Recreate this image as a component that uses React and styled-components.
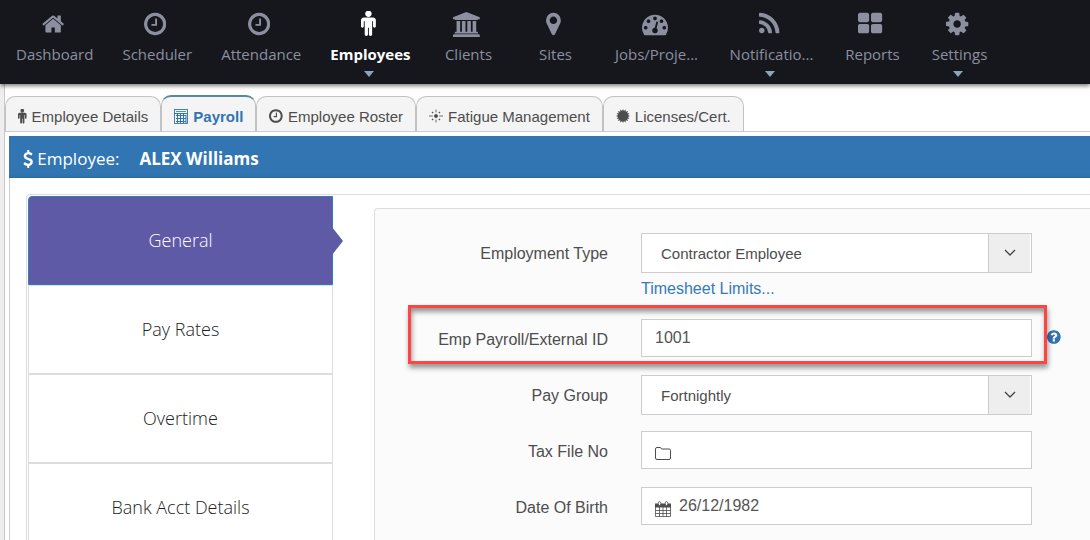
import React, { useState } from 'react';
import styled, { createGlobalStyle, css } from 'styled-components';

const GlobalStyle = createGlobalStyle`
  * { box-sizing: border-box; }
  body {
    margin: 0;
    background: #eeeeee;
    color: #4d4d4d;
    font-family: "Liberation Sans", Arial, sans-serif;
    font-size: 16px;
    overflow-x: hidden;
  }
  button, input, select { font: inherit; color: inherit; border-radius: 0; }
`;

const headingFont = '"Open Sans", "Noto Sans", sans-serif';

// name: [glyph width, path], every glyph is 1792 high
const glyphs = {
  home: [1664, 'M1408 992v480q0 26-19 45t-45 19h-384v-384h-256v384h-384q-26 0-45-19t-19-45v-480q0-1 .5-3t.5-3l575-474 575 474q1 2 1 6zm223-69l-62 74q-8 9-21 11h-3q-13 0-21-7l-692-577-692 577q-12 8-24 7-13-2-21-11l-62-74q-8-10-7-23.5t11-21.5l719-599q32-26 76-26t76 26l244 204v-195q0-14 9-23t23-9h192q14 0 23 9t9 23v408l219 182q10 8 11 21.5t-7 23.5z'],
  clock: [1536, 'M896 544v448q0 14-9 23t-23 9h-320q-14 0-23-9t-9-23v-64q0-14 9-23t23-9h224v-352q0-14 9-23t23-9h64q14 0 23 9t9 23zm416 352q0-148-73-273t-198-198-273-73-273 73-198 198-73 273 73 273 198 198 273 73 273-73 198-198 73-273zm224 0q0 209-103 385.5t-279.5 279.5-385.5 103-385.5-103-279.5-279.5-103-385.5 103-385.5 279.5-279.5 385.5-103 385.5 103 279.5 279.5 103 385.5z'],
  male: [1024, 'M1024 640v416q0 40-28 68t-68 28-68-28-28-68v-352h-64v912q0 46-33 79t-79 33-79-33-33-79v-464h-64v464q0 46-33 79t-79 33-79-33-33-79v-912h-64v352q0 40-28 68t-68 28-68-28-28-68v-416q0-80 56-136t136-56h640q80 0 136 56t56 136zm-288-448q0 93-65.5 158.5t-158.5 65.5-158.5-65.5-65.5-158.5 65.5-158.5 158.5-65.5 158.5 65.5 65.5 158.5z'],
  bank: [1920, 'M960 0l960 384v128h-128q0 26-20.5 45t-48.5 19h-1526q-28 0-48.5-19t-20.5-45h-128v-128zm-704 640h256v768h128v-768h256v768h128v-768h256v768h128v-768h256v768h59q28 0 48.5 19t20.5 45v64h-1664v-64q0-26 20.5-45t48.5-19h59v-768zm1595 960q28 0 48.5 19t20.5 45v128h-1920v-128q0-26 20.5-45t48.5-19h1782z'],
  marker: [1024, 'M768 640q0-106-75-181t-181-75-181 75-75 181 75 181 181 75 181-75 75-181zm256 0q0 109-33 179l-364 774q-16 33-47.5 52t-67.5 19-67.5-19-46.5-52l-365-774q-33-70-33-179 0-212 150-362t362-150 362 150 150 362z'],
  gauge: [1792, 'M384 1152q0-53-37.5-90.5t-90.5-37.5-90.5 37.5-37.5 90.5 37.5 90.5 90.5 37.5 90.5-37.5 37.5-90.5zm192-448q0-53-37.5-90.5t-90.5-37.5-90.5 37.5-37.5 90.5 37.5 90.5 90.5 37.5 90.5-37.5 37.5-90.5zm428 481l101-382q6-26-7.5-48.5t-38.5-29.5-48 6.5-30 39.5l-101 382q-60 5-107 43.5t-63 98.5q-20 77 20 146t117 89 146-20 89-117q16-60-6-117t-72-91zm660-33q0-53-37.5-90.5t-90.5-37.5-90.5 37.5-37.5 90.5 37.5 90.5 90.5 37.5 90.5-37.5 37.5-90.5zm-640-640q0-53-37.5-90.5t-90.5-37.5-90.5 37.5-37.5 90.5 37.5 90.5 90.5 37.5 90.5-37.5 37.5-90.5zm448 192q0-53-37.5-90.5t-90.5-37.5-90.5 37.5-37.5 90.5 37.5 90.5 90.5 37.5 90.5-37.5 37.5-90.5zm320 448q0 261-141 483-19 29-54 29h-1402q-35 0-54-29-141-221-141-483 0-182 71-348t191-286 286-191 348-71 348 71 286 191 191 286 71 348z'],
  rss: [1408, 'M384 1344q0 80-56 136t-136 56-136-56-56-136 56-136 136-56 136 56 56 136zm512 123q2 28-17 48-18 21-47 21h-135q-25 0-43-16.5t-20-41.5q-22-229-184.5-391.5t-391.5-184.5q-25-2-41.5-20t-16.5-43v-135q0-29 21-47 17-17 43-17h5q160 13 306 80.5t259 181.5q114 113 181.5 259t80.5 306zm512 2q2 27-18 47-18 20-46 20h-143q-26 0-44.5-17.5t-19.5-42.5q-12-215-101-408.5t-231.5-336-336-231.5-408.5-102q-25-1-42.5-19.5t-17.5-43.5v-143q0-28 20-46 18-18 44-18h3q262 13 501.5 120t425.5 294q187 186 294 425.5t120 501.5z'],
  large: [1664, 'M768 1024v384q0 52-38 90t-90 38h-512q-52 0-90-38t-38-90v-384q0-52 38-90t90-38h512q52 0 90 38t38 90zm0-768v384q0 52-38 90t-90 38h-512q-52 0-90-38t-38-90v-384q0-52 38-90t90-38h512q52 0 90 38t38 90zm896 768v384q0 52-38 90t-90 38h-512q-52 0-90-38t-38-90v-384q0-52 38-90t90-38h512q52 0 90 38t38 90zm0-768v384q0 52-38 90t-90 38h-512q-52 0-90-38t-38-90v-384q0-52 38-90t90-38h512q52 0 90 38t38 90z'],
  cog: [1536, 'M1024 896q0-106-75-181t-181-75-181 75-75 181 75 181 181 75 181-75 75-181zm512-109v222q0 12-8 23t-20 13l-185 28q-19 54-39 91 35 50 107 138 10 12 10 25t-9 23q-27 37-99 108t-94 71q-12 0-26-9l-138-108q-44 23-91 38-16 136-29 186-7 28-36 28h-222q-14 0-24.5-8.5t-11.5-21.5l-28-184q-49-16-90-37l-141 107q-10 9-25 9-14 0-25-11-126-114-165-168-7-10-7-23 0-12 8-23 15-21 51-66.5t54-70.5q-27-50-41-99l-183-27q-13-2-21-12.5t-8-23.5v-222q0-12 8-23t19-13l186-28q14-46 39-92-40-57-107-138-10-12-10-24 0-10 9-23 26-36 98.5-107.5t94.5-71.5q13 0 26 10l138 107q44-23 91-38 16-136 29-186 7-28 36-28h222q14 0 24.5 8.5t11.5 21.5l28 184q49 16 90 37l142-107q9-9 24-9 13 0 25 10 129 119 165 170 7 8 7 22 0 12-8 23-15 21-51 66.5t-54 70.5q26 50 41 98l183 28q13 2 21 12.5t8 23.5z'],
  help: [1536, 'M896 1376v-192q0-14-9-23t-23-9h-192q-14 0-23 9t-9 23v192q0 14 9 23t23 9h192q14 0 23-9t9-23zm256-672q0-88-55.5-163t-138.5-116-170-41q-243 0-371 213-15 24 8 42l132 100q7 6 19 6 16 0 25-12 53-68 86-92 34-24 86-24 48 0 85.5 26t37.5 59q0 38-20 61t-68 45q-63 28-115.5 86.5t-52.5 125.5v36q0 14 9 23t23 9h192q14 0 23-9t9-23q0-19 21.5-49.5t54.5-49.5q32-18 49-28.5t46-35 44.5-48 28-60.5 12.5-81zm384 192q0 209-103 385.5t-279.5 279.5-385.5 103-385.5-103-279.5-279.5-103-385.5 103-385.5 279.5-279.5 385.5-103 385.5 103 279.5 279.5 103 385.5z'],
  dollar: [1024, 'M978 1185q0 153-99.5 263.5t-258.5 136.5v175q0 14-9 23t-23 9h-135q-13 0-22.5-9.5t-9.5-22.5v-175q-66-9-127.5-31t-101.5-44.5-74-48-46.5-37.5-17.5-18q-17-21-2-41l103-135q7-10 23-12 15-2 24 9l2 2q113 99 243 125 37 8 74 8 81 0 142.5-43t61.5-122q0-28-15-53t-33.5-42-58.5-37.5-66-32-80-32.5q-39-16-61.5-25t-61.5-26.5-62.5-31-56.5-35.5-53.5-42.5-43.5-49-35.5-58-21-66.5-8.5-78q0-138 98-242t255-134v-180q0-13 9.5-22.5t22.5-9.5h135q14 0 23 9t9 23v176q57 6 110.5 23t87 33.5 63.5 37.5 39 29 15 14q17 18 5 38l-81 146q-8 15-23 16-14 3-27-7-3-3-14.5-12t-39-26.5-58.5-32-74.5-26-85.5-11.5q-95 0-155 43t-60 111q0 26 8.5 48t29.5 41.5 39.5 33 56 31 60.5 27 70 27.5q53 20 81 31.5t76 35 75.5 42.5 62 50 53 63.5 31.5 76.5 13 94z'],
};

function Glyph({ name, size }) {
  const [width, d] = glyphs[name];
  return (
    <svg height={size} width={(size * width) / 1792} viewBox={`0 0 ${width} 1792`} fill="currentColor" aria-hidden="true">
      <path d={d} />
    </svg>
  );
}

const GridCalendar = () => (
  <svg width="14" height="15" viewBox="0 0 14 15" fill="none" stroke="currentColor" aria-hidden="true">
    <rect x=".5" y=".5" width="13" height="14" strokeWidth=".9" />
    <path d="M2 2.5h10" strokeWidth=".8" />
    <path d="M0 4.500h14M2 6.500h10M2 9.500h10M2 12.500h10M3.500 5v9M6.500 5v9M9.500 5v9M12 6v8" />
  </svg>
);

const Sun = () => (
  <svg width="14" height="14" viewBox="0 0 14 14" fill="none" stroke="currentColor" strokeWidth=".8" aria-hidden="true">
    <circle cx="7" cy="7" r="1.6" fill="currentColor" />
    <path d="M7 .5v3M7 10.500v3M0 7h3.800M10.200 7H14" />
    <path d="M3 3l1.200 1.200M9.800 9.800l1.200 1.200M3 11l1.200-1.200M9.800 4.200L11 3" strokeWidth="1.200" />
  </svg>
);

const burst = Array.from({ length: 32 }, (_, i) => {
  const r = i % 2 ? 5 : 7;
  const a = (i * Math.PI) / 16;
  return `${(7 + r * Math.sin(a)).toFixed(2)},${(7 - r * Math.cos(a)).toFixed(2)}`;
}).join(' ');

const Seal = () => (
  <svg width="14" height="14" viewBox="0 0 14 14" fill="currentColor" aria-hidden="true">
    <polygon points={burst} />
  </svg>
);

const Folder = () => (
  <svg width="16" height="13" viewBox="0 0 16 13" fill="none" stroke="currentColor" aria-hidden="true">
    <path d="M.5 2q0-1.500 1.500-1.500h3q1 0 1.300 1l.2.500h7.500q1.500 0 1.500 1.500v7.500q0 1.500-1.500 1.500h-12q-1.500 0-1.500-1.500z" />
  </svg>
);

const Calendar = () => (
  <svg width="16" height="16" viewBox="0 0 16 16" fill="none" stroke="currentColor" strokeWidth=".8" aria-hidden="true">
    <path d="M0 2.500h16v4H0z" fill="currentColor" stroke="none" />
    <path d="M.5 3v12.500h15V3M.5 9.500h15M.5 12.500h15M4.500 6v9.500M8 6v9.500M11.500 6v9.500" />
    <ellipse cx="4.500" cy="2.500" rx="1.300" ry="2" fill="#fff" />
    <ellipse cx="11.500" cy="2.500" rx="1.300" ry="2" fill="#fff" />
  </svg>
);

const Chevron = () => (
  <svg width="12" height="8" viewBox="0 0 12 8" fill="none" stroke="#444" strokeWidth="1.300" aria-hidden="true">
    <path d="M1 1l5 5 5-5" />
  </svg>
);

const NavBar = styled.nav`
  position: relative;
  display: flex;
  gap: 3px;
  height: 84px;
  padding: 12px 3px 0;
  background: #16171c;
  box-shadow: 0 2px 4px rgba(0, 0, 0, 0.5);
`;

const NavLink = styled.a`
  display: flex;
  flex-direction: column;
  align-items: center;
  flex: none;
  min-width: ${({ $wide }) => ($wide ? '112px' : '84px')};
  padding: 0 13px;
  color: #8b8fa0;
  font-family: ${headingFont};
  font-size: 15px;
  line-height: 20px;
  text-decoration: none;
  ${({ $active }) => $active && css`
    color: #fff;
    font-weight: 700;
  `}
`;

const NavIcon = styled.span`
  display: flex;
  align-items: center;
  height: 24px;
  margin-bottom: 8px;
  padding-right: 4px;
`;

const Caret = styled.span`
  margin-top: 7px;
  margin-right: 3px;
  border: 5px solid transparent;
  border-top: 6px solid #8aa4b8;
  border-bottom: 0;
`;

const Sheet = styled.main`
  margin-left: 4px;
  padding-top: 11px;
  border-left: 1px solid #c8c8c8;
  background: #fff;
`;

const Tabs = styled.div`
  display: flex;
  align-items: flex-end;
  border-bottom: 1px solid #ccc;
`;

const Tab = styled.button`
  display: flex;
  align-items: center;
  gap: 5px;
  height: 35px;
  padding: 4px 12px 0;
  border: 1px solid #c2c2c2;
  border-bottom: 0;
  border-radius: 10px 10px 0 0;
  background: #f4f4f4;
  color: #4d4d4d;
  font-size: 15px;
  white-space: nowrap;
  ${({ $active }) => $active && css`
    height: 36px;
    border-top: 2px solid #55899d;
    color: #3174b5;
    font-weight: 700;
  `}
`;

const Panel = styled.section`
  margin: 4px 0 0 4px;
  border-left: 1px solid #ccc;
`;

const PanelHeader = styled.h1`
  display: flex;
  align-items: center;
  gap: 4px;
  height: 42px;
  margin: 0 0 0 -1px;
  padding: 3px 14px 0;
  background: linear-gradient(#3176b2 90%, #2c6ca4);
  color: #fff;
  font: 400 17px/24px ${headingFont};

  strong {
    margin-left: 16px;
  }
`;

const Content = styled.div`
  display: flex;
  margin: 16px 0 0 16px;
  padding: 1px 0 0 1px;
  border: solid #ddd;
  border-width: 1px 0 0 1px;
  border-radius: 4px 0 0 0;
`;

const SideMenu = styled.nav`
  flex: none;
  width: 305px;
`;

const MenuLink = styled.a`
  position: relative;
  display: flex;
  align-items: center;
  justify-content: center;
  height: 89px;
  padding-bottom: 2px;
  border: 1px solid #ddd;
  color: #222;
  font-family: ${headingFont};
  font-size: 18px;
  font-weight: 300;
  text-decoration: none;
  ${({ $active }) => $active && css`
    border-color: #337ab7;
    border-top-left-radius: 4px;
    background: #5f5aa5;
    color: #fff;

    &::after {
      content: '';
      position: absolute;
      left: 100%;
      top: 30px;
      border: solid transparent;
      border-width: 14px 0 14px 11px;
      border-left-color: #5f5aa5;
    }
  `}
`;

const Form = styled.form`
  flex: 1;
  margin: 12px 0 0 41px;
  padding-top: 24px;
  border: solid #ddd;
  border-width: 1px 0 0 1px;
  border-radius: 4px 0 0 0;
  background: #fbfbfb;
`;

const Row = styled.div`
  position: relative;
  display: grid;
  grid-template-columns: 266fr 391fr 58fr;
  align-items: start;
  min-height: 56px;
`;

const Label = styled.label`
  padding-right: 33px;
  line-height: 42px;
  text-align: right;
`;

const Input = styled.input`
  display: block;
  width: 100%;
  height: 38px;
  padding: 0 13px;
  padding-left: ${({ $icon }) => ($icon ? '37px' : '13px')};
  border: 1px solid #ccc;
  background: #fff;
  color: #555;
`;

const Field = styled.div`
  position: relative;
`;

const FieldIcon = styled.span`
  position: absolute;
  left: 14px;
  top: 14px;
  display: flex;
  align-items: center;
  height: 16px;
`;

const Select = styled.select`
  display: block;
  width: 100%;
  height: 40px;
  padding: 0 60px 0 19px;
  border: 1px solid #ccc;
  appearance: none;
  background: #fff;
  font-size: 15px;
`;

const Arrow = styled.span`
  position: absolute;
  top: 1px;
  right: 1px;
  display: flex;
  align-items: center;
  justify-content: center;
  width: 43px;
  height: 38px;
  border-left: 1px solid #ccc;
  border-right: 1px solid #fff;
  background: #eee;
  pointer-events: none;
`;

const LimitsLink = styled.a`
  display: block;
  margin: 6px 0 20px;
  color: #337ab7;
  line-height: 20px;
  text-decoration: none;
`;

const Help = styled.button`
  display: flex;
  align-items: center;
  height: 36px;
  margin-left: 15px;
  padding: 0;
  border: 0;
  background: none;
  color: #3174b5;
`;

const Highlight = styled.div`
  position: absolute;
  top: -14px;
  left: 33px;
  right: 43px;
  height: 59px;
  border: 3px solid #ff4444;
  box-shadow: 1px 4px 5px rgba(0, 0, 0, 0.4), inset 1px 4px 5px rgba(0, 0, 0, 0.4);
  pointer-events: none;
`;

const navItems = [
  { label: 'Dashboard', icon: 'home', size: 24 },
  { label: 'Scheduler', icon: 'clock', size: 26 },
  { label: 'Attendance', icon: 'clock', size: 26 },
  { label: 'Employees', icon: 'male', size: 26, caret: true },
  { label: 'Clients', icon: 'bank', size: 25 },
  { label: 'Sites', icon: 'marker', size: 26 },
  { label: 'Jobs/Proje...', icon: 'gauge', size: 26, wide: true },
  { label: 'Notificatio...', icon: 'rss', size: 26, wide: true, caret: true },
  { label: 'Reports', icon: 'large', size: 26 },
  { label: 'Settings', icon: 'cog', size: 26, caret: true },
];

const tabs = [
  { label: 'Employee Details', icon: <Glyph name="male" size={15} /> },
  { label: 'Payroll', icon: <GridCalendar /> },
  { label: 'Employee Roster', icon: <Glyph name="clock" size={16} /> },
  { label: 'Fatigue Management', icon: <Sun /> },
  { label: 'Licenses/Cert.', icon: <Seal /> },
];

const menu = ['General', 'Pay Rates', 'Overtime', 'Bank Acct Details'];

function SelectField({ id, options }) {
  return (
    <Field>
      <Select id={id}>
        {options.map((o) => <option key={o}>{o}</option>)}
      </Select>
      <Arrow><Chevron /></Arrow>
    </Field>
  );
}

export default function App() {
  const [tab, setTab] = useState('Payroll');
  const [section, setSection] = useState('General');

  return (
    <>
      <GlobalStyle />
      <NavBar>
        {navItems.map(({ label, icon, size, wide, caret }) => (
          <NavLink key={label} href="#" $wide={wide} $active={label === 'Employees'}>
            <NavIcon><Glyph name={icon} size={size} /></NavIcon>
            {label}
            {caret && <Caret />}
          </NavLink>
        ))}
      </NavBar>
      <Sheet>
        <Tabs role="tablist">
          {tabs.map(({ label, icon }) => (
            <Tab
              key={label}
              type="button"
              role="tab"
              aria-selected={tab === label}
              $active={tab === label}
              onClick={() => setTab(label)}
            >
              {icon}
              {label}
            </Tab>
          ))}
        </Tabs>
        <Panel>
          <PanelHeader>
            <Glyph name="dollar" size={18} />
            Employee: <strong>ALEX Williams</strong>
          </PanelHeader>
          <Content>
            <SideMenu>
              {menu.map((item) => (
                <MenuLink key={item} href="#" $active={section === item} onClick={() => setSection(item)}>
                  {item}
                </MenuLink>
              ))}
            </SideMenu>
            <Form>
              <Row>
                <Label htmlFor="type">Employment Type</Label>
                <div>
                  <SelectField id="type" options={['Contractor Employee', 'Permanent Employee']} />
                  <LimitsLink href="#">Timesheet Limits...</LimitsLink>
                </div>
              </Row>
              <Row>
                <Label htmlFor="payrollId">Emp Payroll/External ID</Label>
                <Input id="payrollId" defaultValue="1001" />
                <Help type="button" aria-label="Help"><Glyph name="help" size={16} /></Help>
                <Highlight />
              </Row>
              <Row>
                <Label htmlFor="payGroup">Pay Group</Label>
                <SelectField id="payGroup" options={['Fortnightly', 'Weekly']} />
              </Row>
              <Row>
                <Label htmlFor="taxFile">Tax File No</Label>
                <Field>
                  <Input id="taxFile" $icon />
                  <FieldIcon><Folder /></FieldIcon>
                </Field>
              </Row>
              <Row>
                <Label htmlFor="dob">Date Of Birth</Label>
                <Field>
                  <Input id="dob" $icon defaultValue="26/12/1982" />
                  <FieldIcon><Calendar /></FieldIcon>
                </Field>
              </Row>
            </Form>
          </Content>
        </Panel>
      </Sheet>
    </>
  );
}
